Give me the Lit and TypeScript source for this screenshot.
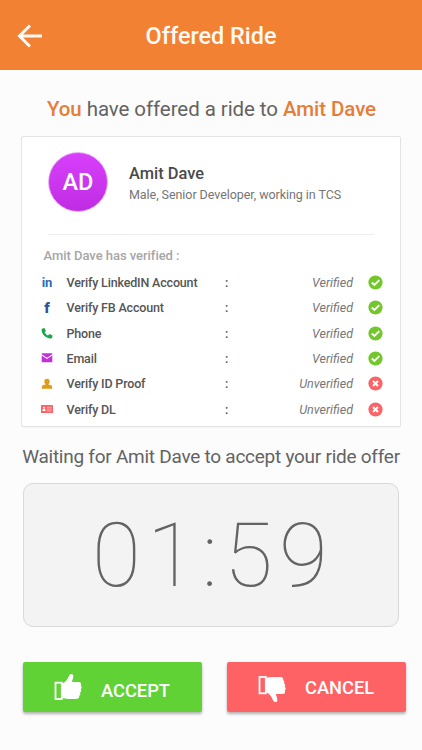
import { LitElement, html, css, svg } from "lit";
import { customElement, property } from "lit/decorators.js";

const rowIcons: Record<string, unknown> = {
  phone: svg`<path fill="#17a84b" d="M1.500 1.400 3.400.9 4.900 3.900 3.700 5.200c.7 1.600 1.700 2.500 3.300 3.200l1.500-1.300 3 1.500-.2 1.600c-.2.8-.9 1.300-1.900 1.300C4.700 11.300.7 7.300.6 3.100c0-.9.3-1.400.9-1.700z"/>`,
  email: svg`<path fill="#c42fdc" d="M.7 1.300h10.600v1L6 5.700.7 2.300z"/><path fill="#c42fdc" d="M.7 3.500 6 7l5.300-3.500v6.700H.7z"/>`,
  person: svg`<circle cx="6" cy="3.400" r="2.700" fill="#e09a1c"/><path fill="#e09a1c" d="M4.500 5h3v1.500l2.600.8c.9.4 1.100 1.400 1.100 3.500H.8c0-2.100.2-3.100 1.100-3.500l2.600-.8z"/>`,
  card: svg`<rect x="0" y="2" width="12" height="8" rx=".6" fill="#fa6468"/><circle cx="3" cy="4.800" r="1" fill="#fff"/><path fill="#fff" d="M1.400 8.100c0-1.400.6-2 1.600-2s1.600.6 1.600 2z"/><path stroke="#ffb5b7" stroke-width=".9" d="M5.800 4.300h4.800M5.800 6.100h4.800M5.800 7.900h4.800"/>`,
};

interface Check {
  icon: string;
  label: string;
  ok: boolean;
}

const checks: Check[] = [
  { icon: "in", label: "Verify LinkedIN Account", ok: true },
  { icon: "f", label: "Verify FB Account", ok: true },
  { icon: "phone", label: "Phone", ok: true },
  { icon: "email", label: "Email", ok: true },
  { icon: "person", label: "Verify ID Proof", ok: false },
  { icon: "card", label: "Verify DL", ok: false },
];

@customElement("check-row")
class CheckRow extends LitElement {
  @property({ attribute: false }) item!: Check;

  static styles = css`
    :host {
      display: grid;
      grid-template-columns: 12px 147px 1fr 15px;
      align-items: center;
      height: 25.36px;
      font-size: 12.500px;
      color: #555;
    }
    .icon { display: flex; justify-content: center; align-items: center; width: 12px; height: 12px; }
    .brand { font-weight: 700; font-size: 13px; line-height: 12px; padding-top: 1px; }
    .in { color: #2f69b5; }
    .f { color: #34519a; font-weight: 900; font-size: 15px; }
    .label { padding-left: 13.500px; font-weight: 500; white-space: nowrap; letter-spacing: -.17px; }
    .status {
      display: flex;
      justify-content: space-between;
      padding: 0 14.500px 0 25px;
      font-style: italic;
      color: #777;
    }
    .colon { font-style: normal; font-weight: 500; color: #4d4d4d; }
    svg { display: block; }
  `;

  render() {
    const { icon, label, ok } = this.item;
    return html`
      <span class="icon">
        ${rowIcons[icon]
          ? html`<svg width="12" height="12" viewBox="0 0 12 12">${rowIcons[icon]}</svg>`
          : html`<span class="brand ${icon}">${icon}</span>`}
      </span>
      <span class="label">${label}</span>
      <span class="status"><span class="colon">:</span>${ok ? "Verified" : "Unverified"}</span>
      <svg width="15" height="15" viewBox="0 0 15 15" fill="none" stroke="#fff">
        <circle cx="7.500" cy="7.500" r="7.100" fill=${ok ? "#74c72b" : "#fb6366"} stroke="none" />
        ${ok
          ? svg`<path stroke-width="1.900" d="m3.800 7.500 2.600 2.500 4.900-4.900"/>`
          : svg`<path stroke-width="2.100" d="m5 5 5 5m0-5-5 5"/>`}
      </svg>
    `;
  }
}

@customElement("app-root")
class AppRoot extends LitElement {
  static styles = css`
    * { box-sizing: border-box; }
    :host {
      display: block;
      height: 750px;
      background: #fcfcfc;
      font-family: Roboto, sans-serif;
      color: #636363;
      white-space: nowrap;
      overflow: hidden;
    }
    header {
      display: grid;
      grid-template-columns: 60px 1fr 60px;
      align-items: center;
      height: 70px;
      padding-top: 1px;
      background: #f28134;
      color: #fffaf5;
    }
    .back { display: block; margin-left: 17px; }
    h1 { margin: 0; text-align: center; font-size: 23.400px; font-weight: 500; }
    .intro {
      height: 66px;
      padding: 11px 0 0 1px;
      display: flex;
      justify-content: center;
      align-items: center;
      font-size: 20.500px;
      letter-spacing: -.07px;
    }
    .intro p { margin: 0; }
    b { font-weight: 500; color: #e87d38; }
    .card {
      height: 291px;
      margin: 0 21px;
      background: #fff;
      border: 1px solid #e3e3e3;
      border-radius: 2px;
      box-shadow: 0 1px 1px rgba(0, 0, 0, .03);
    }
    .profile {
      display: flex;
      height: 98px;
      margin: 0 26px;
      padding-top: 15px;
      border-bottom: 1px solid #ededed;
    }
    .avatar {
      display: grid;
      place-items: center;
      width: 60px;
      height: 60px;
      border: 1px solid #eab0f6;
      border-radius: 50%;
      background: linear-gradient(#d840fb, #bf2ce2);
      color: #fff;
      font-size: 23.500px;
      font-weight: 500;
    }
    .who { padding: 11px 0 0 21px; }
    .name { font-size: 16.400px; line-height: 22px; font-weight: 500; color: #4a4a4a; }
    .bio { font-size: 12.500px; line-height: 19px; letter-spacing: -.06px; color: #757575; }
    .subtitle {
      height: 34.700px;
      padding: 12px 0 0 21.500px;
      font-size: 13px;
      line-height: 18px;
      font-weight: 500;
      letter-spacing: -.04px;
      color: #a6a6a6;
    }
    .rows { padding: 0 17.500px 0 19px; }
    .waiting { height: 56px; line-height: 60px; text-align: center; font-size: 19px; letter-spacing: -.255px; }
    .timer {
      display: flex;
      justify-content: center;
      align-items: center;
      height: 144px;
      margin: 0 23px;
      padding-left: 4px;
      background: #f3f3f3;
      border: 1px solid #d9d9d9;
      border-radius: 10px;
      font-size: 89px;
      font-weight: 100;
      letter-spacing: 6.300px;
    }
    .actions { display: flex; gap: 25px; padding: 35px 0 0 23px; }
    button {
      display: flex;
      align-items: center;
      width: 179px;
      height: 50px;
      padding: 0 0 0 30px;
      border: 0;
      border-radius: 2px;
      color: #fff;
      font: 500 18.300px Roboto, sans-serif;
      box-shadow: 0 2px 3px rgba(0, 0, 0, .3);
    }
    .accept { background: #60d236; }
    .cancel { background: #ff6265; }
    .accept span { padding: 6px 0 0 18px; }
    .cancel span { padding: 0 0 0 18px; }
    .flip { transform: scaleY(-1); margin-top: 4px; }
  `;

  private thumb(cls: string) {
    return html`<svg class=${cls} width="30" height="30" viewBox="0 0 30 30" fill="#fff">
      <rect x="2.500" y="10.700" width="6.300" height="16.300" fill="none" stroke="#fff" stroke-width="1.800" />
      <path d="M9 11.800c2-.8 4-2.300 5.700-5.200 1-1.600 1.300-3 2.200-4 1.100-1.200 3.200-.7 3.400.9.200 2.100-.8 4.100-1.500 6.500h6.300c2.700 0 3.700 1.700 2.700 3.500 1.200 1.100 1.100 2.800-.1 3.700.9 1.300.5 2.800-.7 3.500.7 1.300.3 2.600-.8 3.100.4 1.700-.7 3.100-2.400 3.100H15c-2 0-3.500-.7-6-.7z" />
    </svg>`;
  }

  render() {
    return html`
      <header>
        <svg class="back" width="26" height="24" viewBox="0 0 26 24" fill="none" stroke="currentColor" stroke-width="3">
          <path d="M13 1.500 2.500 12 13 22.500M2.500 12H25" />
        </svg>
        <h1>Offered Ride</h1>
      </header>
      <div class="intro"><p><b>You</b> have offered a ride to <b>Amit Dave</b></p></div>
      <section class="card">
        <div class="profile">
          <div class="avatar">AD</div>
          <div class="who">
            <div class="name">Amit Dave</div>
            <div class="bio">Male, Senior Developer, working in TCS</div>
          </div>
        </div>
        <div class="subtitle">Amit Dave has verified :</div>
        <div class="rows">${checks.map((c) => html`<check-row .item=${c}></check-row>`)}</div>
      </section>
      <div class="waiting">Waiting for Amit Dave to accept your ride offer</div>
      <div class="timer"><span>01:59</span></div>
      <div class="actions">
        <button class="accept">${this.thumb("up")}<span>ACCEPT</span></button>
        <button class="cancel">${this.thumb("flip")}<span>CANCEL</span></button>
      </div>
    `;
  }
}
